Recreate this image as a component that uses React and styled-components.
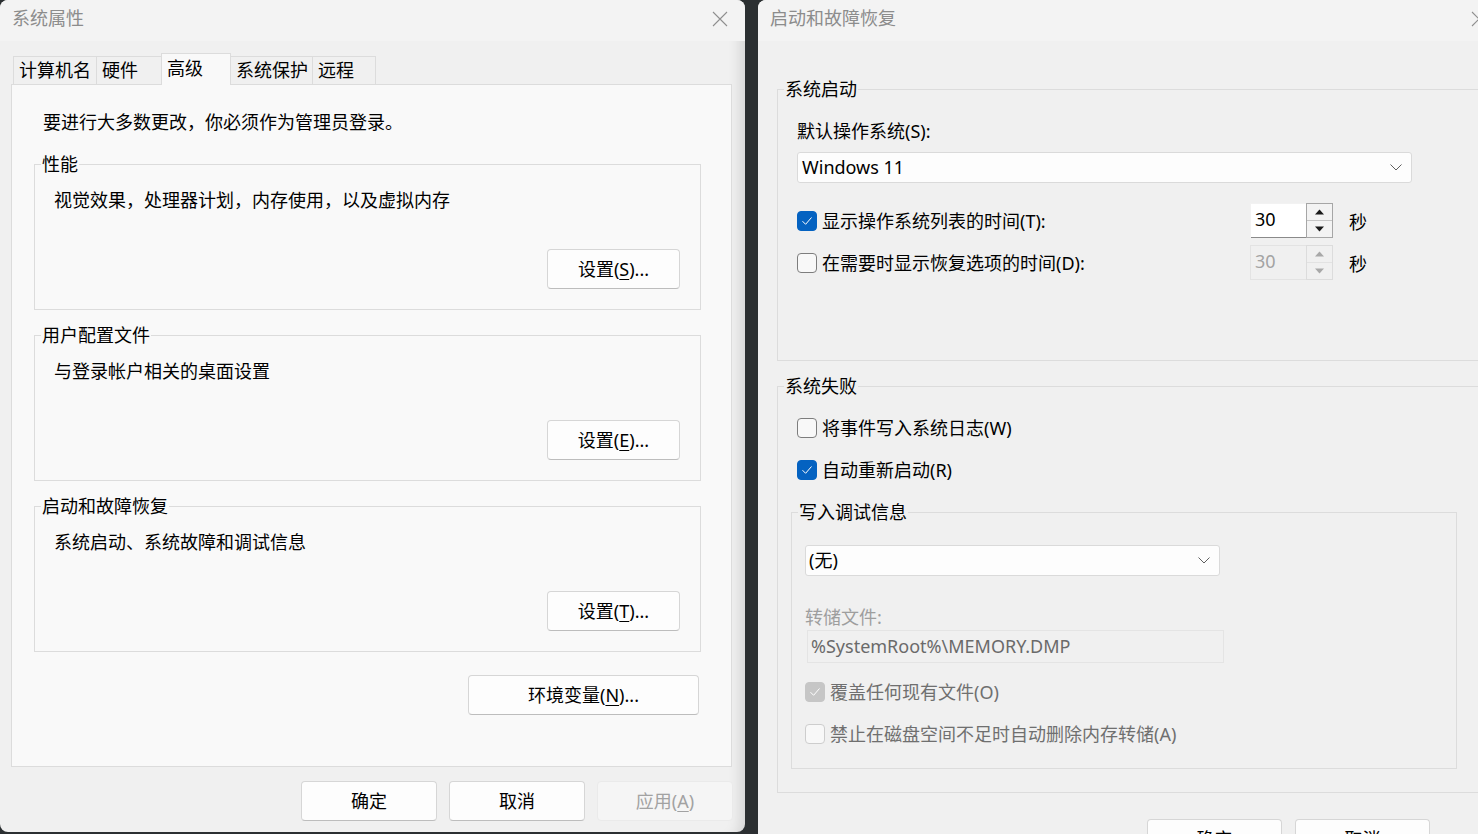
import React from 'react';
import styled, { createGlobalStyle } from 'styled-components';

const GlobalStyle = createGlobalStyle`
  html, body { margin: 0; padding: 0; background: #2b2f31; }
  body {
    font-family: "Noto Sans", "Noto Sans CJK SC", sans-serif;
    font-size: 18px;
    color: #000;
  }
  * { box-sizing: border-box; }
`;

const Desktop = styled.div`
  display: flex;
  align-items: flex-start;
  gap: 13px;
  width: 1478px;
  height: 834px;
  overflow: hidden;
  background: #2b2f31;
`;

const Window = styled.div`
  flex: 0 0 ${(p) => p.$width}px;
  height: ${(p) => p.$height}px;
  background: #f0f0f0;
  border-radius: ${(p) => (p.$open ? '8px 8px 0 0' : '8px')};
  overflow: hidden;
  display: flex;
  flex-direction: column;
  box-shadow: ${(p) => (p.$shaded ? 'inset -16px 0 14px -12px rgba(0,0,0,0.13)' : 'none')};
`;

const TitleBar = styled.div`
  flex: 0 0 41px;
  height: 41px;
  background: #f3f3f3;
  display: flex;
  align-items: center;
  justify-content: space-between;
  padding: 0 17px 5px 12px;
  color: #8c8c8c;
  font-size: 18px;
  line-height: 24px;
`;

const CloseIcon = () => (
  <svg width="16" height="16" viewBox="0 0 16 16" style={{ marginTop: 2 }}>
    <path d="M1 1 L15 15 M15 1 L1 15" stroke="#8f8f8f" strokeWidth="1.1" fill="none" />
  </svg>
);

/* ---------- left window ---------- */

const LeftBody = styled.div`
  display: flex;
  flex-direction: column;
  padding: 12px 13px 0 11px;
`;

const TabStrip = styled.div`
  display: flex;
  align-items: flex-end;
  height: 32px;
  padding-left: 2px;
  margin-bottom: -1px;
  position: relative;
  z-index: 1;
`;

const Tab = styled.div`
  width: ${(p) => p.$width}px;
  height: ${(p) => (p.$active ? 32 : 29)}px;
  margin-right: -1px;
  padding: 0 0 ${(p) => (p.$active ? 4 : 1)}px 5px;
  display: flex;
  align-items: center;
  border: 1px solid #dcdcdc;
  border-bottom: ${(p) => (p.$active ? 'none' : '1px solid #dcdcdc')};
  background: ${(p) => (p.$active ? '#f9f9f9' : '#f0f0f0')};
  position: relative;
  z-index: ${(p) => (p.$active ? 2 : 1)};
  line-height: 26px;
  white-space: nowrap;
`;

const Panel = styled.div`
  height: 683px;
  background: #f9f9f9;
  border: 1px solid #dcdcdc;
  display: flex;
  flex-direction: column;
  padding: 24px 30px 0 22px;
`;

const Intro = styled.div`
  padding-left: 9px;
  line-height: 26px;
`;

const Group = styled.fieldset`
  margin: ${(p) => p.$top || 0}px 0 0 0;
  padding: 0;
  border: 1px solid #dcdcdc;
  min-width: 0;
  width: ${(p) => (p.$width ? `${p.$width}px` : 'auto')};
`;

const GroupBody = styled.div`
  display: flex;
  flex-direction: column;
  padding: 0 ${(p) => p.$pr ?? 19}px ${(p) => p.$pb ?? 20}px ${(p) => p.$pl ?? 19}px;
`;

const Legend = styled.legend`
  padding: 0 1px;
  margin-left: 6px;
  line-height: 26px;
  font-size: 18px;
`;

const Text = styled.div`
  line-height: 26px;
  margin-top: ${(p) => p.$top || 0}px;
  margin-left: ${(p) => p.$left || 0}px;
  color: ${(p) => p.$color || '#000'};
  white-space: nowrap;
`;

const ButtonRow = styled.div`
  display: flex;
  justify-content: flex-end;
  gap: ${(p) => p.$gap ?? 13}px;
  margin-top: ${(p) => p.$top || 0}px;
  margin-right: ${(p) => p.$shift || 0}px;
  padding-right: ${(p) => p.$right || 0}px;
`;

const Button = styled.div`
  width: ${(p) => p.$width}px;
  height: 40px;
  flex: 0 0 auto;
  display: flex;
  align-items: center;
  justify-content: center;
  border-radius: 4px;
  border: 1px solid ${(p) => (p.$disabled ? '#eaeaea' : '#d6d6d6')};
  border-bottom-color: ${(p) => (p.$disabled ? '#eaeaea' : '#bdbdbd')};
  background: ${(p) => (p.$disabled ? '#f5f5f5' : '#fdfdfd')};
  color: ${(p) => (p.$disabled ? '#a2a2a2' : '#000')};
  line-height: 26px;
  white-space: nowrap;
  padding-bottom: 1px;
`;

const Key = styled.span`
  text-decoration: underline;
  text-underline-offset: 3px;
  text-decoration-thickness: 1px;
`;

/* ---------- right window ---------- */

const RightBody = styled.div`
  display: flex;
  flex-direction: column;
  padding: 35px 19px 0 19px;
`;

const Select = styled.div`
  display: flex;
  align-items: center;
  justify-content: space-between;
  width: ${(p) => p.$width}px;
  height: 31px;
  margin-top: ${(p) => p.$top || 0}px;
  background: #fdfdfd;
  border: 1px solid #dadada;
  border-radius: 3px;
  padding: 0 9px 1px ${(p) => p.$pl || 4}px;
  line-height: 26px;
`;

const Chevron = () => (
  <svg width="12" height="7" viewBox="0 0 12 7">
    <path d="M0.5 0.5 L6 6 L11.5 0.5" stroke="#5f5f5f" strokeWidth="1" fill="none" />
  </svg>
);

const OptionRow = styled.div`
  display: grid;
  grid-template-columns: 437px 83px auto;
  column-gap: 16px;
  align-items: center;
  height: 35px;
  margin-top: ${(p) => p.$top || 0}px;
`;

const CheckRow = styled.div`
  display: flex;
  align-items: center;
  gap: 5px;
  height: 26px;
  margin-top: ${(p) => p.$top || 0}px;
  padding-left: ${(p) => p.$indent || 0}px;
  color: ${(p) => (p.$disabled ? '#6f6f6f' : '#000')};
  white-space: nowrap;
  line-height: 26px;
`;

const Box = styled.span`
  flex: 0 0 20px;
  width: 20px;
  height: 20px;
  border-radius: 4px;
  display: inline-flex;
  align-items: center;
  justify-content: center;
  background: ${(p) => (p.$checked ? (p.$disabled ? '#c6c6c6' : '#0462c1') : '#f8f8f8')};
  border: 1px solid
    ${(p) => (p.$checked ? (p.$disabled ? '#c6c6c6' : '#0462c1') : p.$disabled ? '#cdcdcd' : '#7d7d7d')};
`;

const CheckBox = ({ checked, disabled }) => (
  <Box $checked={checked} $disabled={disabled}>
    {checked && (
      <svg width="12" height="10" viewBox="0 0 12 10">
        <path d="M1.5 5.2 L4.6 8.3 L10.5 1.5" stroke="#fff" strokeWidth="1" fill="none" />
      </svg>
    )}
  </Box>
);

const Spin = styled.div`
  display: flex;
  width: 83px;
  height: 35px;
  background: ${(p) => (p.$disabled ? '#f0f0f0' : '#ffffff')};
  border: 1px solid ${(p) => (p.$disabled ? '#e3e3e3' : '#f2f2f2')};
`;

const SpinValue = styled.div`
  flex: 1;
  padding: 0 0 3px 4px;
  display: flex;
  align-items: center;
  color: ${(p) => (p.$disabled ? '#a3a3a3' : '#000')};
  border-bottom: 1px solid ${(p) => (p.$disabled ? '#e3e3e3' : '#8a8a8a')};
  margin-bottom: -1px;
  line-height: 26px;
`;

const SpinButtons = styled.div`
  flex: 0 0 27px;
  display: flex;
  flex-direction: column;
  border: 1px solid ${(p) => (p.$disabled ? '#dcdcdc' : '#a6a6a6')};
  margin: -1px -1px -1px 0;
`;

const SpinBtn = styled.div`
  flex: 1;
  display: flex;
  align-items: center;
  justify-content: center;
  background: ${(p) => (p.$disabled ? '#f0f0f0' : '#f3f3f3')};
  border-top: ${(p) => (p.$lower ? `1px solid ${p.$disabled ? '#e2e2e2' : '#c4c4c4'}` : 'none')};
`;

const Arrow = ({ down, disabled }) => (
  <svg width="9" height="6" viewBox="0 0 9 6">
    <path
      d={down ? 'M0 0.5 L9 0.5 L4.5 5.5 Z' : 'M0 5.5 L9 5.5 L4.5 0.5 Z'}
      fill={disabled ? '#a8a8a8' : '#1a1a1a'}
    />
  </svg>
);

const SpinBox = ({ value, disabled }) => (
  <Spin $disabled={disabled}>
    <SpinValue $disabled={disabled}>{value}</SpinValue>
    <SpinButtons $disabled={disabled}>
      <SpinBtn $disabled={disabled}>
        <Arrow disabled={disabled} />
      </SpinBtn>
      <SpinBtn $disabled={disabled} $lower>
        <Arrow down disabled={disabled} />
      </SpinBtn>
    </SpinButtons>
  </Spin>
);

const Field = styled.div`
  width: 417px;
  height: 33px;
  margin-left: 2px;
  display: flex;
  align-items: center;
  padding: 0 0 2px 3px;
  background: #f0f0f0;
  border: 1px solid #e4e4e4;
  color: #6a6a6a;
  line-height: 26px;
`;

const tabs = [
  { label: '计算机名', width: 84 },
  { label: '硬件', width: 66 },
  { label: '高级', width: 70, active: true },
  { label: '系统保护', width: 83 },
  { label: '远程', width: 64 },
];

const groups = [
  { title: '性能', desc: '视觉效果，处理器计划，内存使用，以及虚拟内存', key: 'S' },
  { title: '用户配置文件', desc: '与登录帐户相关的桌面设置', key: 'E' },
  { title: '启动和故障恢复', desc: '系统启动、系统故障和调试信息', key: 'T' },
];

export default function App() {
  return (
    <>
      <GlobalStyle />
      <Desktop>
        <Window $width={745} $height={832} $shaded>
          <TitleBar>
            <span>系统属性</span>
            <CloseIcon />
          </TitleBar>
          <LeftBody>
            <TabStrip>
              {tabs.map((t) => (
                <Tab key={t.label} $width={t.width} $active={t.active}>
                  {t.label}
                </Tab>
              ))}
            </TabStrip>
            <Panel>
              <Intro>要进行大多数更改，你必须作为管理员登录。</Intro>
              {groups.map((g, i) => (
                <Group key={g.title} $top={i === 0 ? 16 : 12}>
                  <Legend>{g.title}</Legend>
                  <GroupBody>
                    <Text $top={10}>{g.desc}</Text>
                    <ButtonRow $top={36} $right={1}>
                      <Button $width={133}>
                        设置(<Key>{g.key}</Key>)...
                      </Button>
                    </ButtonRow>
                  </GroupBody>
                </Group>
              ))}
              <ButtonRow $top={23} $right={2}>
                <Button $width={231}>
                  环境变量(<Key>N</Key>)...
                </Button>
              </ButtonRow>
            </Panel>
            <ButtonRow $top={14} $shift={-1} $gap={12}>
              <Button $width={136}>确定</Button>
              <Button $width={136}>取消</Button>
              <Button $width={136} $disabled>
                应用(<Key>A</Key>)
              </Button>
            </ButtonRow>
          </LeftBody>
        </Window>

        <Window $width={746} $height={900} $open>
          <TitleBar>
            <span>启动和故障恢复</span>
            <CloseIcon />
          </TitleBar>
          <RightBody>
            <Group>
              <Legend>系统启动</Legend>
              <GroupBody $pb={80}>
                <Text $top={16}>默认操作系统(S):</Text>
                <Select $width={615} $top={8}>
                  <span>Windows 11</span>
                  <Chevron />
                </Select>
                <OptionRow $top={20}>
                  <CheckRow>
                    <CheckBox checked />
                    显示操作系统列表的时间(T):
                  </CheckRow>
                  <SpinBox value="30" />
                  <span>秒</span>
                </OptionRow>
                <OptionRow $top={7}>
                  <CheckRow>
                    <CheckBox />
                    在需要时显示恢复选项的时间(D):
                  </CheckRow>
                  <SpinBox value="30" disabled />
                  <span>秒</span>
                </OptionRow>
              </GroupBody>
            </Group>

            <Group $top={12}>
              <Legend>系统失败</Legend>
              <GroupBody $pl={13} $pb={23}>
                <CheckRow $top={16} $indent={6}>
                  <CheckBox />
                  将事件写入系统日志(W)
                </CheckRow>
                <CheckRow $top={16} $indent={6}>
                  <CheckBox checked />
                  自动重新启动(R)
                </CheckRow>
                <Group $top={16} $width={666}>
                  <Legend>写入调试信息</Legend>
                  <GroupBody $pl={13} $pb={21}>
                    <Select $width={415} $top={20} $pl={3}>
                      <span>(无)</span>
                      <Chevron />
                    </Select>
                    <Text $top={28} $color="#9e9e9e">
                      转储文件:
                    </Text>
                    <Field>%SystemRoot%\MEMORY.DMP</Field>
                    <CheckRow $top={16} $disabled>
                      <CheckBox checked disabled />
                      覆盖任何现有文件(O)
                    </CheckRow>
                    <CheckRow $top={16} $disabled>
                      <CheckBox disabled />
                      禁止在磁盘空间不足时自动删除内存转储(A)
                    </CheckRow>
                  </GroupBody>
                </Group>
              </GroupBody>
            </Group>
            <ButtonRow $top={26} $right={55}>
              <Button $width={135}>确定</Button>
              <Button $width={135}>取消</Button>
            </ButtonRow>
          </RightBody>
        </Window>
      </Desktop>
    </>
  );
}
